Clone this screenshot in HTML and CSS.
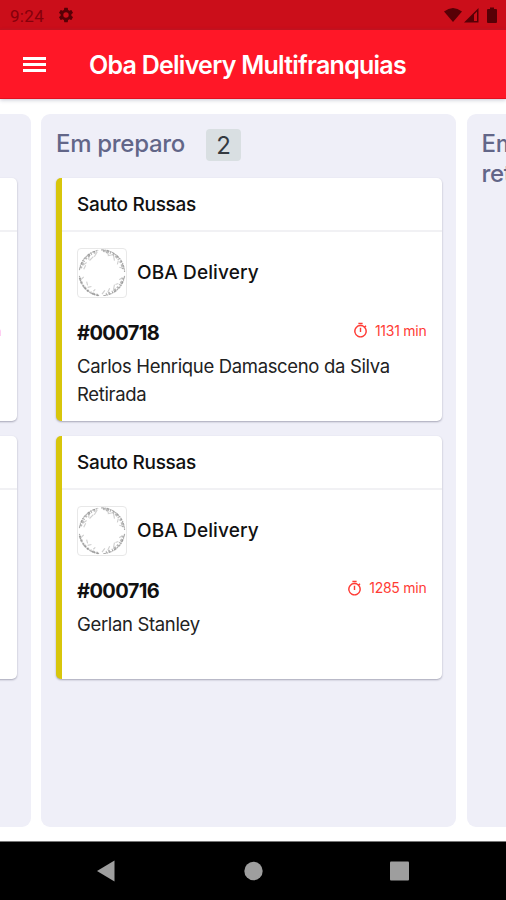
FILE: index.html
```html
<!DOCTYPE html>
<html lang="pt-BR">
<head>
    <meta charset="UTF-8">
    <meta name="viewport" content="width=device-width, initial-scale=1.0">
    <title>Oba Delivery Multifranquias</title>
    <link rel="stylesheet" href="styles.css">
</head>
<body>
    <svg class="defs" width="0" height="0">
        <symbol id="timer" viewBox="0 0 24 24">
            <path d="M15 1H9v2h6V1zm-4 13h2V8h-2v6zm8.03-6.61l1.42-1.42c-.43-.51-.9-.99-1.41-1.41l-1.42 1.42A8.96 8.96 0 0 0 12 4a9 9 0 1 0 7.03 3.39zM12 20a7 7 0 1 1 0-14 7 7 0 0 1 0 14z"/>
        </symbol>
        <symbol id="wreath" viewBox="0 0 50 50">
            <g fill="none" stroke="#777">
                <path stroke-width="1.2" stroke-dasharray="3 .8 1.5 .6" opacity=".6" d="M1.500 22A23.500 23.500 0 0 1 21 1.500M24 1A23.500 23.500 0 0 1 48.500 24M48.500 28A23.500 23.500 0 0 1 26 48.500M22 48.500A23.500 23.500 0 0 1 1.500 28"/>
                <path stroke-width="2.4" stroke-dasharray="2 1.5 3 1 1.2 2" opacity=".5" d="M3 20A23 23 0 0 1 19 3M26 2A23 23 0 0 1 47 21M47 30A23 23 0 0 1 29 47M21 48A23 23 0 0 1 2 30"/>
                <path stroke-width="1.2" opacity=".35" d="M5 17l4-3M6 21l2-4M11 11l1-5M12 12l4-4M17 8l3-5M28 2l4 4M31 7l5-1M37 7l1 5M42 12l-1 4M43 19l4 1M46 30l-3 2M42 36l-3 1M38 37l-1 5M33 41l-2 4M28 43l-3 4M18 42l-2 2M14 39l-4 1M9 34l1 4M6 29l-2 2"/>
            </g>
        </symbol>
    </svg>

    <div class="status">
        <span class="clock">9:24</span>
        <svg class="gear" viewBox="0 0 24 24"><path d="M19.14 12.94c.04-.3.06-.61.06-.94 0-.32-.02-.64-.07-.94l2.03-1.58a.49.49 0 0 0 .12-.61l-1.92-3.32a.49.49 0 0 0-.59-.22l-2.39.96c-.5-.38-1.03-.7-1.62-.94l-.36-2.54a.48.48 0 0 0-.48-.41h-3.84a.47.47 0 0 0-.47.41l-.36 2.54c-.59.24-1.13.57-1.62.94l-2.39-.96a.48.48 0 0 0-.59.22L2.74 8.87a.47.47 0 0 0 .12.61l2.03 1.58c-.05.3-.09.63-.09.94s.02.64.07.94l-2.03 1.58a.49.49 0 0 0-.12.61l1.92 3.32c.12.22.37.29.59.22l2.39-.96c.5.38 1.03.7 1.62.94l.36 2.54c.05.24.24.41.48.41h3.84c.24 0 .44-.17.47-.41l.36-2.54c.59-.24 1.13-.56 1.62-.94l2.39.96c.22.08.47 0 .59-.22l1.92-3.32a.47.47 0 0 0-.12-.61l-2.01-1.58zM12 15.6a3.6 3.6 0 1 1 0-7.2 3.6 3.6 0 0 1 0 7.2z"/></svg>
        <svg class="signals" viewBox="0 0 54 17">
            <path d="M0 4.5Q9 -2.5 18 4.5L9 15z"/>
            <path fill-rule="evenodd" d="M20 15.5L34.5 1V15.5zM30 7.5V14H33V4.5z"/>
            <path d="M43 3Q43 2 44 2H46V.5H50V2H52Q53 2 53 3V15Q53 16 52 16H44Q43 16 43 15z"/>
        </svg>
    </div>

    <header class="toolbar">
        <div class="menu"><i></i><i></i><i></i></div>
        <h1>Oba Delivery Multifranquias</h1>
    </header>

    <main class="board">
        <section class="column">
            <div class="column-head"></div>
            <article class="card">
                <div class="store"></div>
                <div class="brand"></div>
                <div class="order"><span class="time">min</span></div>
            </article>
            <article class="card">
                <div class="store"></div>
            </article>
        </section>

        <section class="column">
            <div class="column-head">
                <h2>Em preparo</h2>
                <span class="count">2</span>
            </div>
            <article class="card">
                <div class="store"><span>Sauto Russas</span></div>
                <div class="brand">
                    <svg class="logo"><use href="#wreath"/></svg>
                    <span>OBA Delivery</span>
                </div>
                <div class="order">
                    <strong>#000718</strong>
                    <span class="time"><svg><use href="#timer"/></svg><span>1131 min</span></span>
                </div>
                <p>Carlos Henrique Damasceno da Silva<br>Retirada</p>
            </article>
            <article class="card">
                <div class="store"><span>Sauto Russas</span></div>
                <div class="brand">
                    <svg class="logo"><use href="#wreath"/></svg>
                    <span>OBA Delivery</span>
                </div>
                <div class="order">
                    <strong>#000716</strong>
                    <span class="time"><svg><use href="#timer"/></svg><span>1285 min</span></span>
                </div>
                <p>Gerlan Stanley</p>
            </article>
        </section>

        <section class="column">
            <div class="column-head">
                <h2>Em<br>retirada</h2>
            </div>
        </section>
    </main>

    <nav class="navbar">
        <svg viewBox="0 0 20 22"><path d="M1 11L18.5 .5V21.5z"/></svg>
        <svg viewBox="0 0 20 22"><circle cx="10.5" cy="11" r="9.2"/></svg>
        <svg viewBox="0 0 20 22"><rect x="0" y="1.5" width="19" height="19" rx="1"/></svg>
    </nav>
</body>
</html>
```

FILE: styles.css
```css
* {
    box-sizing: border-box;
}
body {
    margin: 0;
    width: 506px;
    height: 900px;
    display: flex;
    flex-direction: column;
    overflow: hidden;
    background-color: #fff;
    color: #111;
    font-family: Inter, "Open Sans", sans-serif;
}
h1, h2, p {
    margin: 0;
}
.defs {
    position: absolute;
}
.status {
    height: 30px;
    padding: 0 8px 0 10px;
    display: flex;
    align-items: center;
    background-color: #cb0e1a;
    color: #85000b;
}
.clock {
    font-family: Roboto, sans-serif;
    font-size: 17px;
    letter-spacing: 0.3px;
    width: 47px;
    padding-top: 1px;
}
.gear {
    width: 18px;
    height: 18px;
    fill: #570006;
}
.signals {
    width: 54px;
    height: 17px;
    margin-left: auto;
    fill: #570006;
}
.toolbar {
    height: 69px;
    padding-left: 23px;
    display: flex;
    align-items: center;
    background-color: #ff1727;
    border-bottom: 1px solid #e2101f;
    box-shadow: 0 1px 4px rgba(60, 70, 110, 0.3);
    color: #fff;
}
.menu {
    width: 66px;
    padding-top: 1px;
    display: flex;
    flex-direction: column;
    gap: 3px;
}
.menu i {
    width: 23px;
    height: 3px;
    background-color: #fff;
}
h1 {
    padding-top: 2px;
    font-size: 25px;
    font-weight: 600;
    letter-spacing: -0.75px;
    white-space: nowrap;
}
.board {
    height: 742px;
    margin-left: -384.5px;
    padding: 15px 0 14px;
    display: flex;
    gap: 10.5px;
}
.column {
    flex: 0 0 415px;
    padding: 15px 14px 0 15px;
    background-color: #efeff8;
    border-radius: 9px;
}
.column-head {
    height: 49px;
    display: flex;
    align-items: flex-start;
    gap: 21px;
}
h2 {
    color: #626688;
    font-size: 24px;
    font-weight: 500;
    line-height: 30px;
    letter-spacing: -0.3px;
}
.count {
    width: 35px;
    height: 32px;
    border-radius: 4px;
    background-color: #d9dfe2;
    color: #343a40;
    font-size: 24px;
    line-height: 33px;
    text-align: center;
}
.card {
    height: 243px;
    margin-bottom: 14.5px;
    padding-left: 15px;
    background-color: #fff;
    border-left: 6px solid #d8c60b;
    border-radius: 5px;
    box-shadow: 0 1px 2px rgba(30, 30, 60, 0.35);
}
.store {
    height: 54px;
    margin-left: -15px;
    padding-left: 15px;
    border-bottom: 2px solid #f1f1f4;
    font-size: 19px;
    font-weight: 500;
    line-height: 53px;
    letter-spacing: -0.3px;
}
.brand {
    height: 84px;
    padding-top: 16px;
    display: flex;
    gap: 10px;
    font-size: 19px;
    font-weight: 500;
    line-height: 50px;
    letter-spacing: 0.12px;
}
.logo {
    width: 50px;
    height: 50px;
    border: 1px solid #e8e8e8;
    border-radius: 4px;
}
.order {
    height: 36px;
    padding-right: 15.5px;
    display: flex;
    justify-content: space-between;
    font-size: 20px;
    line-height: 34px;
}
.order strong {
    font-weight: 700;
    letter-spacing: -0.6px;
}
.time {
    display: flex;
    align-items: center;
    gap: 6px;
    height: 29px;
    margin-left: auto;
    color: #ff3b35;
    font-size: 14px;
    letter-spacing: -0.25px;
}
.time svg {
    width: 17px;
    height: 17px;
    fill: #ff3b35;
}
p {
    color: #222;
    font-size: 18.5px;
    font-weight: 400;
    line-height: 28px;
    letter-spacing: -0.34px;
    white-space: nowrap;
}
.navbar {
    height: 59px;
    padding: 0 96px;
    display: flex;
    align-items: center;
    justify-content: space-between;
    background-color: #000;
    border-top: 1px solid #777;
}
.navbar svg {
    width: 20px;
    height: 22px;
    fill: #9e9e9e;
}
```
